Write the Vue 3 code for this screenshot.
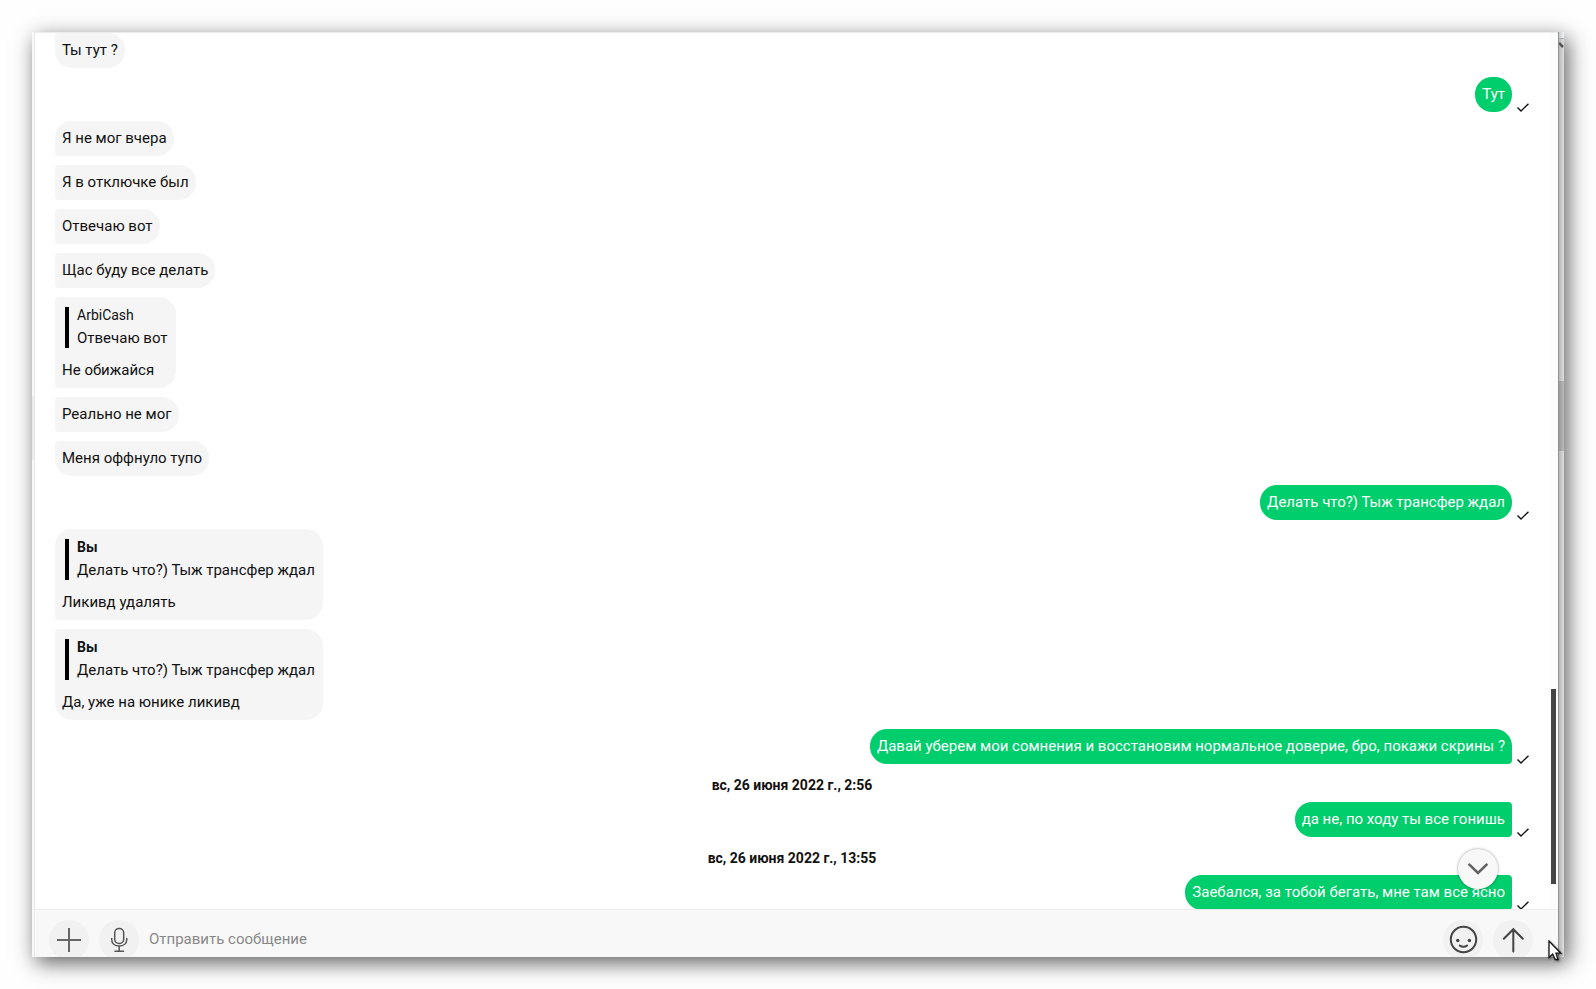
<script setup>
import { ref } from 'vue'

const draft = ref('')

const messages = [
  { text: 'Ты тут ?', shape: 'last' },
  { text: 'Тут', own: true, shape: 'single' },
  { text: 'Я не мог вчера', shape: 'first' },
  { text: 'Я в отключке был', shape: 'middle' },
  { text: 'Отвечаю вот', shape: 'middle' },
  { text: 'Щас буду все делать', shape: 'middle' },
  { text: 'Не обижайся', shape: 'middle', quote: { author: 'ArbiCash', text: 'Отвечаю вот' } },
  { text: 'Реально не мог', shape: 'middle' },
  { text: 'Меня оффнуло тупо', shape: 'last' },
  { text: 'Делать что?) Тыж трансфер ждал', own: true, shape: 'single' },
  { text: 'Ликивд удалять', shape: 'first', quote: { author: 'Вы', me: true, text: 'Делать что?) Тыж трансфер ждал' } },
  { text: 'Да, уже на юнике ликивд', shape: 'last', quote: { author: 'Вы', me: true, text: 'Делать что?) Тыж трансфер ждал' } },
  { text: 'Давай уберем мои сомнения и восстановим нормальное доверие, бро, покажи скрины ?', own: true, shape: 'first' },
  { date: 'вс, 26 июня 2022 г., 2:56' },
  { text: 'да не, по ходу ты все гонишь', own: true, shape: 'middle' },
  { date: 'вс, 26 июня 2022 г., 13:55' },
  { text: 'Заебался, за тобой бегать, мне там все ясно', own: true, shape: 'middle' },
]
</script>

<template>
  <div class="desktop">
    <div class="window">
      <div class="edge-left"><span class="edge-left-mark"></span></div>
      <main class="chat">
        <section class="history">
          <div class="messages">
            <template v-for="(m, i) in messages" :key="i">
              <time v-if="m.date" class="date">{{ m.date }}</time>
              <div v-else class="row" :class="{ own: m.own }">
                <div class="bubble" :class="m.shape">
                  <blockquote v-if="m.quote" class="quote">
                    <div class="author" :class="{ me: m.quote.me }">{{ m.quote.author }}</div>
                    <div class="quoted">{{ m.quote.text }}</div>
                  </blockquote>
                  <div>{{ m.text }}</div>
                </div>
                <svg v-if="m.own" class="tick" viewBox="0 0 12 9" aria-hidden="true">
                  <path d="M0.5 4.5 L4 8 L11.5 0.7" />
                </svg>
              </div>
            </template>
          </div>
          <div class="track"><span class="thumb"></span></div>
          <button class="jump" type="button" aria-label="Вниз">
            <svg viewBox="0 0 20 12" aria-hidden="true"><path d="M1.4 1.6 L10 10 L18.6 1.6" /></svg>
          </button>
        </section>
        <form class="composer" @submit.prevent>
          <button class="round" type="button" aria-label="Прикрепить">
            <svg viewBox="0 0 40 40" aria-hidden="true"><path class="plus" d="M8 20H32M20 8V32" /></svg>
          </button>
          <button class="round" type="button" aria-label="Голосовое сообщение">
            <svg viewBox="0 0 40 40" aria-hidden="true">
              <rect x="15.7" y="8.5" width="9" height="15" rx="4.3" />
              <path d="M12.7 18.5V19.5C12.7 23.6 16 26 20.2 26S27.8 23.6 27.8 19.5V18.5M20.2 26V31M16 31.2H24.5" />
            </svg>
          </button>
          <input v-model="draft" class="field" type="text" placeholder="Отправить сообщение" aria-label="Отправить сообщение" />
          <button class="round" type="button" aria-label="Смайлы">
            <svg class="bold" viewBox="0 0 40 40" aria-hidden="true">
              <circle cx="20.5" cy="19.5" r="12.7" />
              <path d="M16.8 25.5C18.6 27.2 22.2 27.2 24.1 25.5" />
              <circle class="eye" cx="14.8" cy="20.5" r="1.7" />
              <circle class="eye" cx="26.4" cy="20.5" r="1.7" />
            </svg>
          </button>
          <button class="round" type="submit" aria-label="Отправить">
            <svg class="bold" viewBox="0 0 40 40" aria-hidden="true"><path d="M20.3 31.5V9.5M10.8 18.7L20.3 9.2L29.8 18.7" /></svg>
          </button>
        </form>
      </main>
      <div class="edge-right">
        <span class="edge-cap"></span>
        <svg class="edge-arrow" viewBox="0 0 5 8" aria-hidden="true"><path d="M0 1L4 5" /></svg>
        <span class="edge-thumb"></span>
      </div>
    </div>
    <svg class="cursor" viewBox="0 0 14 21" aria-hidden="true">
      <path d="M1 1V17.5L4.7 14L7.2 19.5H10L8 13.2H12.8Z" />
    </svg>
  </div>
</template>

<style>
body {
  margin: 0;
  background: #fefefe;
}
</style>

<style scoped>
.desktop {
  position: relative;
  box-sizing: border-box;
  height: 100vh;
  padding: 32px;
  overflow: hidden;
  font-family: Roboto, "Liberation Sans", sans-serif;
  font-size: 15px;
  line-height: 19px;
  color: #111;
}
.window {
  display: flex;
  height: 100%;
  overflow: hidden;
  background: #fff;
  box-shadow: 4px 6px 20px rgba(0, 0, 0, 0.62);
}
.edge-left {
  position: relative;
  width: 2px;
  flex: none;
  background: #f8f8f8;
  border-right: 1px solid #e9e9e9;
}
.edge-left-mark {
  position: absolute;
  top: 364px;
  left: 0;
  width: 2px;
  height: 64px;
  background: #ececec;
}
.chat {
  display: flex;
  flex: 1;
  min-width: 0;
  flex-direction: column;
}
.history {
  position: relative;
  display: flex;
  flex: 1;
  min-height: 0;
  overflow: hidden;
  border-top: 1px solid #ececec;
}
.messages {
  display: flex;
  flex: 1;
  min-width: 0;
  flex-direction: column;
  gap: 9px;
  padding: 0 20px;
}
.row {
  display: flex;
  flex: none;
  align-items: flex-end;
  gap: 5px;
}
.row.own {
  justify-content: flex-end;
}
.bubble {
  padding: 8px 7px;
  border-radius: 17px;
  background: #f5f5f5;
}
.first { border-bottom-left-radius: 4px; }
.middle { border-top-left-radius: 4px; border-bottom-left-radius: 4px; }
.last { border-top-left-radius: 4px; }
.own .bubble {
  border-radius: 17px;
  background: #00cd6b;
  color: #fff;
}
.own .first { border-bottom-right-radius: 4px; }
.own .middle { border-top-right-radius: 4px; border-bottom-right-radius: 4px; }
.tick {
  width: 12px;
  height: 9px;
  fill: none;
  stroke: #111;
  stroke-width: 1.4;
}
.quote {
  margin: 2px 1px 13px 3px;
  padding-left: 8px;
  border-left: 4px solid #000;
}
.author {
  font-size: 14px;
  line-height: 17px;
}
.author.me {
  font-weight: 700;
}
.quoted {
  padding-top: 4px;
  line-height: 20px;
}
.date {
  flex: none;
  align-self: center;
  padding-top: 4px;
  font-size: 14px;
  font-weight: 700;
  line-height: 16px;
}
.track {
  display: flex;
  width: 9px;
  flex: none;
  flex-direction: column;
  justify-content: flex-end;
  align-items: center;
  background: #fcfcfc;
}
.thumb {
  width: 5px;
  height: 195px;
  margin-bottom: 25px;
  background: #454545;
}
.jump {
  position: absolute;
  right: 60px;
  bottom: 20px;
  display: grid;
  width: 40px;
  height: 40px;
  padding: 0;
  place-items: center;
  border: 0;
  border-radius: 50%;
  background: #f8f8f8;
  box-shadow: 0 0 3px rgba(0, 0, 0, 0.4);
}
.jump svg {
  width: 20px;
  height: 12px;
  fill: none;
  stroke: #626262;
  stroke-width: 2.6;
  stroke-linecap: round;
}
.composer {
  display: flex;
  box-sizing: border-box;
  height: 48px;
  flex: none;
  align-items: flex-start;
  gap: 10px;
  padding: 10px 25px 0 14px;
  border-top: 1px solid #ececec;
  background: #f8f8f8;
}
.round {
  width: 40px;
  height: 40px;
  flex: none;
  padding: 0;
  border: 0;
  border-radius: 50%;
  background: #f1f1f1;
}
.round svg {
  display: block;
  width: 40px;
  height: 40px;
  fill: none;
  stroke: #555;
  stroke-width: 1.5;
  stroke-linecap: round;
}
.round svg.bold {
  stroke: #444;
  stroke-width: 2;
}
.round .plus {
  stroke: #666;
  stroke-width: 2;
  stroke-linecap: butt;
}
.round .eye {
  fill: #444;
  stroke: none;
}
.field {
  min-width: 0;
  height: 38px;
  flex: 1;
  padding: 0;
  border: 0;
  outline: 0;
  background: transparent;
  font: inherit;
  color: #111;
}
.field::placeholder {
  color: #888;
  opacity: 1;
}
.edge-right {
  position: relative;
  width: 5px;
  flex: none;
  border-left: 1px solid #929292;
  background: linear-gradient(90deg, #b8b8b8, #dedede);
}
.edge-cap {
  position: absolute;
  inset: 0 0 auto;
  height: 6px;
  border-bottom: 1px solid #a3afb8;
  background: linear-gradient(90deg, #ccc, #f2f2f2);
}
.edge-arrow {
  position: absolute;
  top: 10px;
  left: 0;
  width: 5px;
  height: 8px;
  fill: none;
  stroke: #555;
  stroke-width: 2.5;
}
.edge-thumb {
  position: absolute;
  top: 349px;
  left: 0;
  width: 5px;
  height: 70px;
  background: linear-gradient(90deg, #989898, #bababa);
}
.cursor {
  position: absolute;
  right: 34px;
  bottom: 28px;
  width: 14px;
  height: 21px;
  fill: #fff;
  stroke: #111;
  stroke-width: 1.3;
  filter: drop-shadow(1px 1px 1px rgba(0, 0, 0, 0.5));
}
</style>
